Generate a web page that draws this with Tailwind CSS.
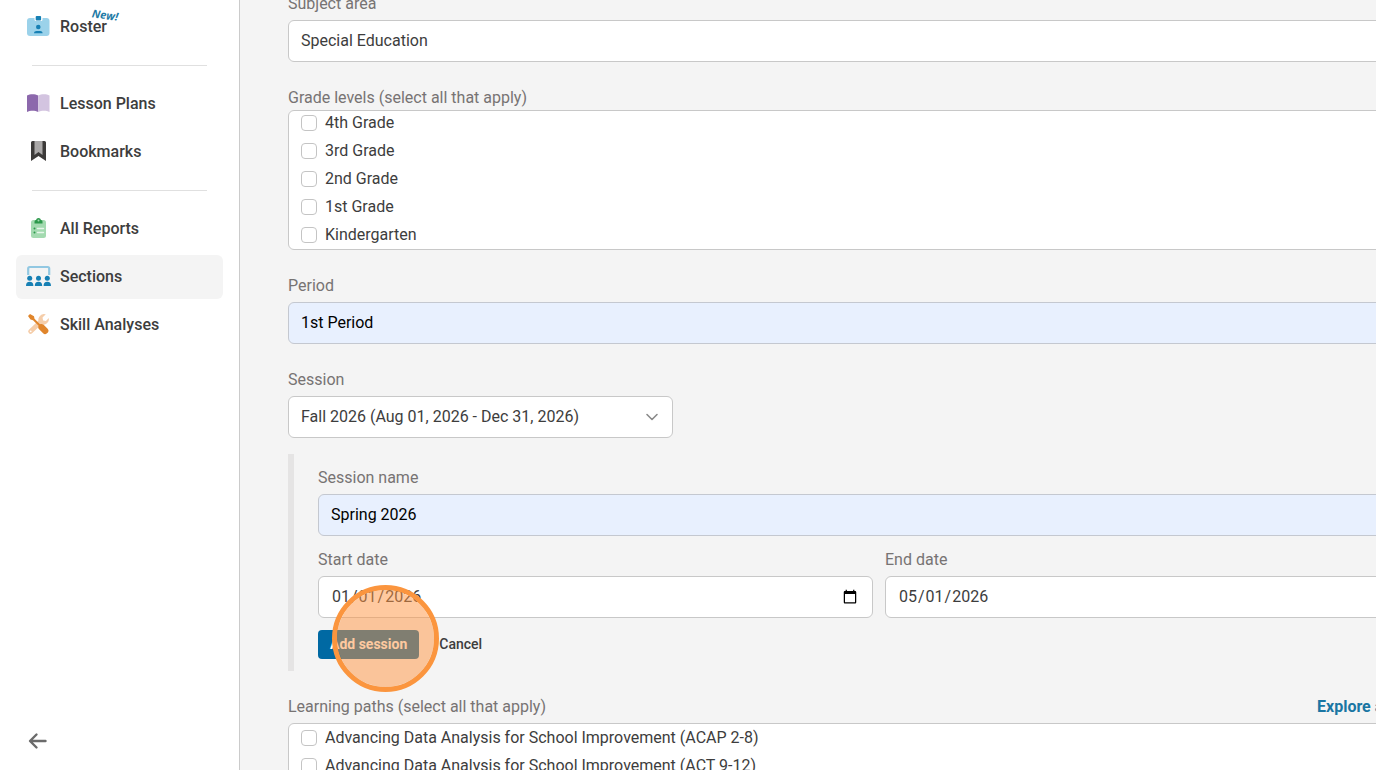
<!DOCTYPE html>
<html lang="en">
<head>
    <meta charset="UTF-8">
    <meta name="viewport" content="width=device-width, initial-scale=1.0">
    <title>Sections</title>
    <script src="https://cdn.jsdelivr.net/npm/@tailwindcss/browser@4"></script>
</head>
<body class="flex h-screen overflow-hidden bg-[#f4f4f4] font-['Roboto',sans-serif] text-base text-[#3d3d3d]">
    <!-- Sidebar -->
    <aside class="flex w-60 shrink-0 flex-col border-r border-[#cbcbcb] bg-white px-4 pt-[5px]">
        <nav class="flex flex-col gap-1 font-medium">
            <a href="#" class="flex h-11 items-center gap-2 rounded-md px-2">
                <svg class="size-7" viewBox="0 0 28 28">
                    <rect x="3" y="5" width="22.500" height="18" rx="3" fill="#9bd2ea"/>
                    <path d="M10.500 5h8v1.500a1.500 1.500 0 0 1-1.500 1.500h-5a1.500 1.500 0 0 1-1.500-1.500z" fill="#fff"/>
                    <rect x="11.700" y="3" width="5.400" height="4.600" rx="1" fill="#1780b4"/>
                    <circle cx="14.300" cy="14" r="2.300" fill="#1780b4"/>
                    <path d="M10 20.200c0-1.500 1.200-2.300 2.500-2.300h3.600c1.300 0 2.500.8 2.500 2.300z" fill="#1780b4"/>
                </svg>
                <span class="relative">Roster
                    <span class="absolute -top-2 left-8 rotate-8 font-['Open_Sans',sans-serif] text-[11px] leading-4 font-bold text-[#1f7ba6] italic">New!</span>
                </span>
            </a>
            <hr class="mx-4 my-3 border-[#e0e0e0]">
            <a href="#" class="flex h-11 items-center gap-2 rounded-md px-2">
                <svg class="size-7" viewBox="0 0 28 28">
                    <path d="M3 5.500C6 3.700 11 3.700 14.200 5.500V22C11 20.200 6 20.200 3 22z" fill="#8c68ac"/>
                    <path d="M25.500 5.500C22.500 3.700 17.500 3.700 14.200 5.500V22C17.500 20.200 22.500 20.200 25.500 22z" fill="#d3c4e0"/>
                </svg>
                <span>Lesson Plans</span>
            </a>
            <a href="#" class="flex h-11 items-center gap-2 rounded-md px-2">
                <svg class="size-7" viewBox="0 0 28 28">
                    <path d="M7 4.500A1.500 1.500 0 0 1 8.500 3h12A1.500 1.500 0 0 1 22 4.500V23l-7.500-5L7 23z" fill="#3c3a39"/>
                    <path d="M10.500 3h8v14l-4-3-4 3z" fill="#aaa8a8"/>
                </svg>
                <span>Bookmarks</span>
            </a>
            <hr class="mx-4 my-3 border-[#e0e0e0]">
            <a href="#" class="flex h-11 items-center gap-2 rounded-md px-2">
                <svg class="size-7" viewBox="0 0 28 28">
                    <rect x="7" y="5" width="15" height="18" rx="2.500" fill="#a3dab0"/>
                    <path d="M10.500 8.500V6.500a1.500 1.500 0 0 1 1.500-1.500 2.600 2.600 0 0 1 5 0 1.500 1.500 0 0 1 1.500 1.500v2z" fill="#2c984b"/>
                    <circle cx="14.500" cy="5.600" r="1" fill="#a3dab0"/>
                    <circle cx="10.500" cy="13.500" r="1" fill="#2c984b"/>
                    <circle cx="10.500" cy="17.500" r="1" fill="#2c984b"/>
                    <path d="M13.500 13.500h6M13.500 17.500h6" stroke="#e6f6ea" stroke-width="1.400" stroke-linecap="round"/>
                </svg>
                <span>All Reports</span>
            </a>
            <a href="#" class="flex h-11 items-center gap-2 rounded-md bg-[#f4f4f4] px-2">
                <svg class="size-7" viewBox="0 0 28 28">
                    <path d="M4.200 12V5.500A1.500 1.500 0 0 1 5.700 4h18a1.500 1.500 0 0 1 1.500 1.500V12" fill="none" stroke="#92c8e2" stroke-width="2.200"/>
                    <g fill="#1780b4">
                        <circle cx="5.700" cy="15.300" r="2.500"/>
                        <circle cx="14.500" cy="15.300" r="2.500"/>
                        <circle cx="23.300" cy="15.300" r="2.500"/>
                        <path d="M2 23c0-3 1.200-4.200 3.700-4.200S9.400 20 9.400 23zM10.800 23c0-3 1.200-4.200 3.700-4.200s3.700 1.200 3.700 4.200zM19.600 23c0-3 1.200-4.200 3.700-4.200S27 20 27 23z"/>
                    </g>
                </svg>
                <span>Sections</span>
            </a>
            <a href="#" class="flex h-11 items-center gap-2 rounded-md px-2">
                <svg class="size-7" viewBox="0 0 28 28">
                    <path d="M6.500 20.500L17 10.500" stroke="#f5cda9" stroke-width="4.600" stroke-linecap="round"/>
                    <path d="M21.800 3.300l-3.300 3.300.6 2.800 2.800.6 2.900-3a5.600 5.600 0 0 1-8.800 5.500 5.600 5.600 0 0 1 5.800-9.200z" fill="#f5cda9"/>
                    <circle cx="6.700" cy="20.300" r=".9" fill="#fff"/>
                    <path d="M4 5L6 3l4 2.300.5 2.500 5.500 5.500c1.300-.7 2.600-.5 3.600.5l4 4c1.200 1.200 1.200 2.400.3 3.600l-1.200 1.200c-1.200.9-2.400.9-3.600-.3l-4-4c-1-1-1.200-2.300-.5-3.600L9 9.200 6.500 8.500z" fill="#e0852b"/>
                </svg>
                <span>Skill Analyses</span>
            </a>
        </nav>
        <button type="button" aria-label="Collapse menu" class="mt-auto mb-[15px] ml-2 flex size-7 items-center justify-center self-start">
            <svg class="size-5" viewBox="0 0 20 20" fill="none" stroke="#6b6b6b" stroke-width="2.400" stroke-linecap="round" stroke-linejoin="round">
                <path d="M17.500 10H3M8.500 3.500L2 10l6.500 6.500"/>
            </svg>
        </button>
    </aside>

    <!-- Section form, runs past the right edge of the window -->
    <main class="min-w-0 flex-1 overflow-hidden pl-12">
        <form class="-mt-2 -mr-16 flex flex-col gap-6">
            <div class="flex flex-col gap-1">
                <label for="subject" class="text-[#777373]">Subject area</label>
                <select id="subject" class="h-[42px] appearance-none rounded-md border border-[#c8c8c8] bg-white px-3">
                    <option>Special Education</option>
                </select>
            </div>

            <fieldset>
                <legend class="text-[#777373]">Grade levels (select all that apply)</legend>
                <div class="flex h-[140px] flex-col justify-end overflow-hidden rounded-md border border-[#c8c8c8] bg-white px-3">
                    <label class="flex h-7 shrink-0 items-center gap-2"><input type="checkbox" class="size-4 appearance-none rounded-sm border border-[#c4c4c4] bg-white">4th Grade</label>
                    <label class="flex h-7 shrink-0 items-center gap-2"><input type="checkbox" class="size-4 appearance-none rounded-sm border border-[#c4c4c4] bg-white">3rd Grade</label>
                    <label class="flex h-7 shrink-0 items-center gap-2"><input type="checkbox" class="size-4 appearance-none rounded-sm border border-[#c4c4c4] bg-white">2nd Grade</label>
                    <label class="flex h-7 shrink-0 items-center gap-2"><input type="checkbox" class="size-4 appearance-none rounded-sm border border-[#c4c4c4] bg-white">1st Grade</label>
                    <label class="flex h-7 shrink-0 items-center gap-2"><input type="checkbox" class="size-4 appearance-none rounded-sm border border-[#c4c4c4] bg-white">Kindergarten</label>
                </div>
            </fieldset>

            <div class="flex flex-col gap-1">
                <label for="period" class="text-[#777373]">Period</label>
                <input id="period" type="text" value="1st Period" class="h-[42px] rounded-md border border-[#c4c8d0] bg-[#e8f0fe] px-3 pb-0.5 text-black">
            </div>

            <div>
                <div class="flex flex-col gap-1">
                    <label for="session" class="text-[#777373]">Session</label>
                    <div class="relative w-[385px]">
                        <select id="session" class="h-[42px] w-full appearance-none rounded-md border border-[#c8c8c8] bg-white px-3">
                            <option>Fall 2026 (Aug 01, 2026 - Dec 31, 2026)</option>
                        </select>
                        <svg class="pointer-events-none absolute top-3 right-3 size-4" viewBox="0 0 16 16" fill="none" stroke="#8a8a8a" stroke-width="1.600" stroke-linecap="round" stroke-linejoin="round">
                            <path d="M2 6.500l5 5 5-5"/>
                        </svg>
                    </div>
                </div>

                <div class="mt-4 flex flex-col gap-3 border-l-6 border-[#e5e4e4] py-3 pl-6">
                    <div class="flex flex-col gap-1">
                        <label for="session-name" class="text-[#777373]">Session name</label>
                        <input id="session-name" type="text" value="Spring 2026" class="h-[42px] rounded-md border border-[#c4c8d0] bg-[#e8f0fe] px-3 pb-0.5 text-black">
                    </div>
                    <div class="grid grid-cols-2 gap-3">
                        <div class="flex flex-col gap-1">
                            <label for="start" class="text-[#777373]">Start date</label>
                            <input id="start" type="date" value="2026-01-01" class="h-[42px] rounded-md border border-[#c8c8c8] bg-white px-3">
                        </div>
                        <div class="flex flex-col gap-1">
                            <label for="end" class="text-[#777373]">End date</label>
                            <input id="end" type="date" value="2026-05-01" class="h-[42px] rounded-md border border-[#c8c8c8] bg-white px-3">
                        </div>
                    </div>
                    <div class="relative flex items-center gap-5 text-sm">
                        <button type="button" class="h-[29px] rounded-sm bg-[#0069a3] px-3 pb-0.5 font-bold text-white">Add session</button>
                        <button type="button" class="h-[29px] pb-0.5 font-medium">Cancel</button>
                        <!-- Click marker -->
                        <div class="pointer-events-none absolute -top-[45px] left-[14px] size-[107px] rounded-full border-5 border-[#fb953e] bg-[#ff933f]/50 bg-clip-padding"></div>
                    </div>
                </div>
            </div>

            <div class="flex flex-col gap-1">
                <div class="flex justify-between">
                    <span id="paths-label" class="text-[#777373]">Learning paths (select all that apply)</span>
                    <a href="#" class="w-[123px] font-bold whitespace-nowrap text-[#1a76a3]">Explore all</a>
                </div>
                <div role="group" aria-labelledby="paths-label" class="flex flex-col rounded-md border border-[#c8c8c8] bg-white px-3">
                    <label class="flex h-7 items-center gap-2"><input type="checkbox" class="size-4 appearance-none rounded-sm border border-[#c4c4c4] bg-white">Advancing Data Analysis for School Improvement (ACAP 2-8)</label>
                    <label class="flex h-7 items-center gap-2"><input type="checkbox" class="size-4 appearance-none rounded-sm border border-[#c4c4c4] bg-white">Advancing Data Analysis for School Improvement (ACT 9-12)</label>
                </div>
            </div>
        </form>
    </main>
</body>
</html>
